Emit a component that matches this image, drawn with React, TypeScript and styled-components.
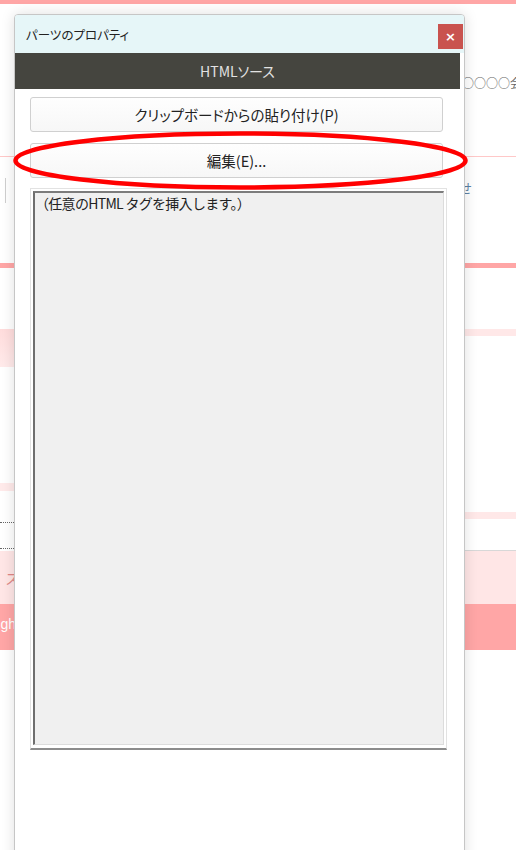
import React from "react";
import styled, { createGlobalStyle } from "styled-components";

const GlobalStyle = createGlobalStyle`
  html, body { margin: 0; padding: 0; background: #fff; }
  body {
    font-family: "Noto Sans CJK JP", "Noto Sans", sans-serif;
    font-feature-settings: "palt";
    overflow: hidden;
  }
`;

const Page = styled.div`
  position: relative;
  width: 516px;
  height: 850px;
  overflow: hidden;
  background: #fff;
`;

const Bar = styled.div<{ $h: number; $bg: string; $top?: number }>`
  height: ${(p) => p.$h}px;
  margin-top: ${(p) => p.$top ?? 0}px;
  background: ${(p) => p.$bg};
`;

const Header = styled.div`
  height: 152px;
  display: flex;
  align-items: center;
  padding: 4px 0 0 414px;
  box-sizing: border-box;
  font-size: 12px;
  color: #666;
  white-space: nowrap;
  overflow: hidden;
  font-feature-settings: normal;
`;

const Nav = styled.div`
  height: 106px;
  display: flex;
  align-items: flex-start;
  justify-content: space-between;
  padding: 21px 44px 0 5px;
  box-sizing: border-box;
`;

const NavSep = styled.div`
  width: 1px;
  height: 25px;
  background: #cfcfcf;
`;

const NavLink = styled.span`
  font-size: 13px;
  color: #5c7fa3;
  font-feature-settings: normal;
`;

const Columns = styled.div`
  display: flex;
`;

const LeftCol = styled.div`
  width: 240px;
  display: flex;
  flex-direction: column;
`;

const RightCol = styled.div`
  flex: 1;
  display: flex;
  flex-direction: column;
`;

const DottedRule = styled.div<{ $top: number }>`
  margin-top: ${(p) => p.$top}px;
  border-top: 1px dotted #666;
`;

const SolidRule = styled.div<{ $top: number }>`
  margin-top: ${(p) => p.$top}px;
  border-top: 1px solid #d8d8d8;
`;

const FooterNav = styled.div`
  height: 53px;
  background: #ffe6e6;
  display: flex;
  align-items: center;
  padding-left: 6px;
  font-size: 14px;
  color: #e08686;
`;

const FooterCopy = styled.div`
  height: 46px;
  background: #ffa6a6;
  padding-top: 12px;
  box-sizing: border-box;
  font-family: "Liberation Sans", Arial, sans-serif;
  font-size: 14px;
  color: #fff;
  text-indent: -40px;
  white-space: nowrap;
`;

const Dialog = styled.div`
  position: absolute;
  left: 14px;
  top: 14px;
  width: 449px;
  height: 900px;
  border: 1px solid #c6c6c6;
  border-radius: 4px;
  background: #fff;
  box-shadow: 0 0 14px rgba(0, 0, 0, 0.13);
  overflow: hidden;
  display: flex;
  flex-direction: column;
`;

const TitleBar = styled.div`
  height: 38px;
  flex: none;
  background: #e6f6f8;
  display: flex;
  align-items: flex-start;
  justify-content: space-between;
  padding-left: 11px;
`;

const Title = styled.span`
  margin-top: 10px;
  font-size: 12.5px;
  color: #222;
`;

const CloseButton = styled.button`
  margin: 9px 1px 0 0;
  width: 25px;
  height: 25px;
  padding: 0;
  border: none;
  background: #c9534f;
  color: #fff;
  font-family: "DejaVu Sans", sans-serif;
  font-size: 13px;
  font-weight: bold;
  line-height: 25px;
`;

const SectionBar = styled.div`
  height: 36px;
  flex: none;
  margin-right: 4px;
  background: #45453f;
  color: #e2e2e2;
  font-size: 14px;
  display: flex;
  align-items: center;
  justify-content: center;
`;

const Content = styled.div`
  display: flex;
  flex-direction: column;
  padding: 8px 17px 0 15px;
`;

const ActionButton = styled.button<{ $top?: number }>`
  width: 413px;
  height: 35px;
  margin-top: ${(p) => p.$top ?? 0}px;
  box-sizing: border-box;
  border: 1px solid #d0d0d0;
  border-radius: 3px;
  background: linear-gradient(#fefefe, #f7f7f7);
  font-family: inherit;
  font-feature-settings: "palt";
  font-size: 14.5px;
  color: #222;
  padding: 0;
`;

const Frame = styled.div`
  margin-top: 10px;
  width: 417px;
  height: 562px;
  box-sizing: border-box;
  border: 1px solid #e2e2e2;
  border-bottom: 2px solid #8c8c8c;
  padding: 2px 2px 3px 2px;
  display: flex;
`;

const Source = styled.textarea`
  flex: 1;
  margin: 0;
  resize: none;
  outline: none;
  box-sizing: border-box;
  border-style: solid;
  border-width: 2px 1px 1px 2px;
  border-color: #7c7c7c #dcdcdc #dcdcdc #6e6e6e;
  background: #f0f0f0;
  font-family: inherit;
  font-feature-settings: normal;
  font-size: 14px;
  letter-spacing: -0.7px;
  line-height: 20px;
  color: #222;
  padding: 0;
`;

const Annotation = styled.svg`
  position: absolute;
  left: 8px;
  top: 125px;
  width: 466px;
  height: 72px;
  pointer-events: none;
`;

export default function App() {
  return (
    <Page>
      <GlobalStyle />
      <Bar $h={4} $bg="#ffa6a6" />
      <Header>○○○○○○○○会社</Header>
      <Bar $h={1} $bg="#ffc8c8" />
      <Nav>
        <NavSep />
        <NavLink>お問い合わせ</NavLink>
      </Nav>
      <Bar $h={5} $bg="#ffa6a6" />
      <Columns>
        <LeftCol>
          <Bar $top={61} $h={38} $bg="linear-gradient(#ffdcdc, #ffeaea)" />
          <Bar $top={116} $h={8} $bg="#ffeaea" />
          <DottedRule $top={31} />
          <DottedRule $top={25} />
        </LeftCol>
        <RightCol>
          <Bar $top={61} $h={7} $bg="#ffe8e8" />
          <Bar $top={176} $h={7} $bg="#ffe8e8" />
          <SolidRule $top={31} />
        </RightCol>
      </Columns>
      <FooterNav>ス</FooterNav>
      <FooterCopy>Copyright © ○○○○ All Rights Reserved.</FooterCopy>

      <Dialog>
        <TitleBar>
          <Title>パーツのプロパティ</Title>
          <CloseButton>×</CloseButton>
        </TitleBar>
        <SectionBar>HTMLソース</SectionBar>
        <Content>
          <ActionButton>クリップボードからの貼り付け(P)</ActionButton>
          <ActionButton $top={11}>編集(E)...</ActionButton>
          <Frame>
            <Source readOnly value="（任意のHTML タグを挿入します。）" />
          </Frame>
        </Content>
      </Dialog>

      <Annotation viewBox="0 0 466 72">
        <ellipse cx="232.5" cy="35.5" rx="225" ry="27" fill="none" stroke="#ff0000" strokeWidth="4.5" />
      </Annotation>
    </Page>
  );
}
